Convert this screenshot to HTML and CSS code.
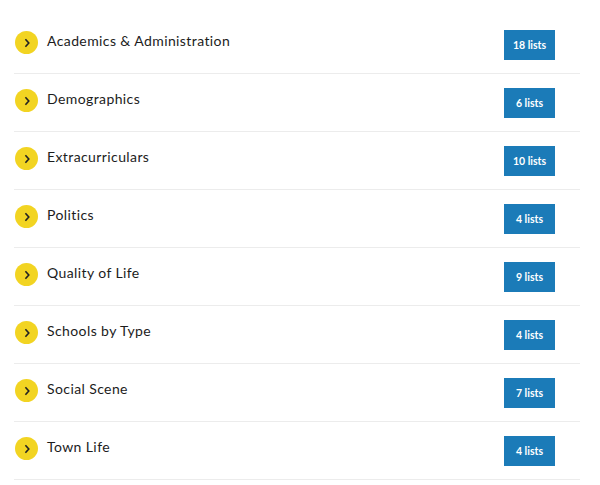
FILE: index.html
```html
<!DOCTYPE html>
<html>
<head>
<meta charset="utf-8">
<link rel="stylesheet" href="styles.css">
</head>
<body>
<ul class="cats">
  <li class="row"><span class="chev"><svg viewBox="0 0 12 12" width="12" height="12"><path d="M4.4 2.2 L7.8 6 L4.4 9.8" fill="none" stroke="#222" stroke-width="1.6"/></svg></span><span class="name">Academics &amp; Administration</span><span class="badge">18 lists</span></li>
  <li class="row"><span class="chev"><svg viewBox="0 0 12 12" width="12" height="12"><path d="M4.4 2.2 L7.8 6 L4.4 9.8" fill="none" stroke="#222" stroke-width="1.6"/></svg></span><span class="name">Demographics</span><span class="badge">6 lists</span></li>
  <li class="row"><span class="chev"><svg viewBox="0 0 12 12" width="12" height="12"><path d="M4.4 2.2 L7.8 6 L4.4 9.8" fill="none" stroke="#222" stroke-width="1.6"/></svg></span><span class="name">Extracurriculars</span><span class="badge">10 lists</span></li>
  <li class="row"><span class="chev"><svg viewBox="0 0 12 12" width="12" height="12"><path d="M4.4 2.2 L7.8 6 L4.4 9.8" fill="none" stroke="#222" stroke-width="1.6"/></svg></span><span class="name">Politics</span><span class="badge">4 lists</span></li>
  <li class="row"><span class="chev"><svg viewBox="0 0 12 12" width="12" height="12"><path d="M4.4 2.2 L7.8 6 L4.4 9.8" fill="none" stroke="#222" stroke-width="1.6"/></svg></span><span class="name">Quality of Life</span><span class="badge">9 lists</span></li>
  <li class="row"><span class="chev"><svg viewBox="0 0 12 12" width="12" height="12"><path d="M4.4 2.2 L7.8 6 L4.4 9.8" fill="none" stroke="#222" stroke-width="1.6"/></svg></span><span class="name">Schools by Type</span><span class="badge">4 lists</span></li>
  <li class="row"><span class="chev"><svg viewBox="0 0 12 12" width="12" height="12"><path d="M4.4 2.2 L7.8 6 L4.4 9.8" fill="none" stroke="#222" stroke-width="1.6"/></svg></span><span class="name">Social Scene</span><span class="badge">7 lists</span></li>
  <li class="row"><span class="chev"><svg viewBox="0 0 12 12" width="12" height="12"><path d="M4.4 2.2 L7.8 6 L4.4 9.8" fill="none" stroke="#222" stroke-width="1.6"/></svg></span><span class="name">Town Life</span><span class="badge">4 lists</span></li>
</ul>
</body>
</html>
```
FILE: styles.css
```css
html, body {
  margin: 0;
  padding: 0;
  background: #fff;
}
.cats {
  list-style: none;
  margin: 0;
  padding: 16px 0 0 14px;
  width: 566px;
  font-family: Lato, "Liberation Sans", sans-serif;
}
.row {
  display: flex;
  align-items: center;
  height: 57px;
  border-bottom: 1px solid #ececec;
  padding-left: 1px;
}
.chev {
  width: 23px;
  height: 23px;
  border-radius: 50%;
  background: #f2d422;
  display: flex;
  align-items: center;
  justify-content: center;
  margin-right: 9px;
  margin-top: -4px;
  flex: none;
}
.name {
  font-size: 14px;
  color: #1c1c1c;
  letter-spacing: 0.4px;
  margin-top: -8px;
}
.badge {
  margin-left: auto;
  margin-right: 25px;
  width: 51px;
  height: 30px;
  background: #1b7bb8;
  color: #fff;
  font-size: 10.5px;
  font-weight: bold;
  display: flex;
  align-items: center;
  justify-content: center;
  margin-top: 1px;
}
```
